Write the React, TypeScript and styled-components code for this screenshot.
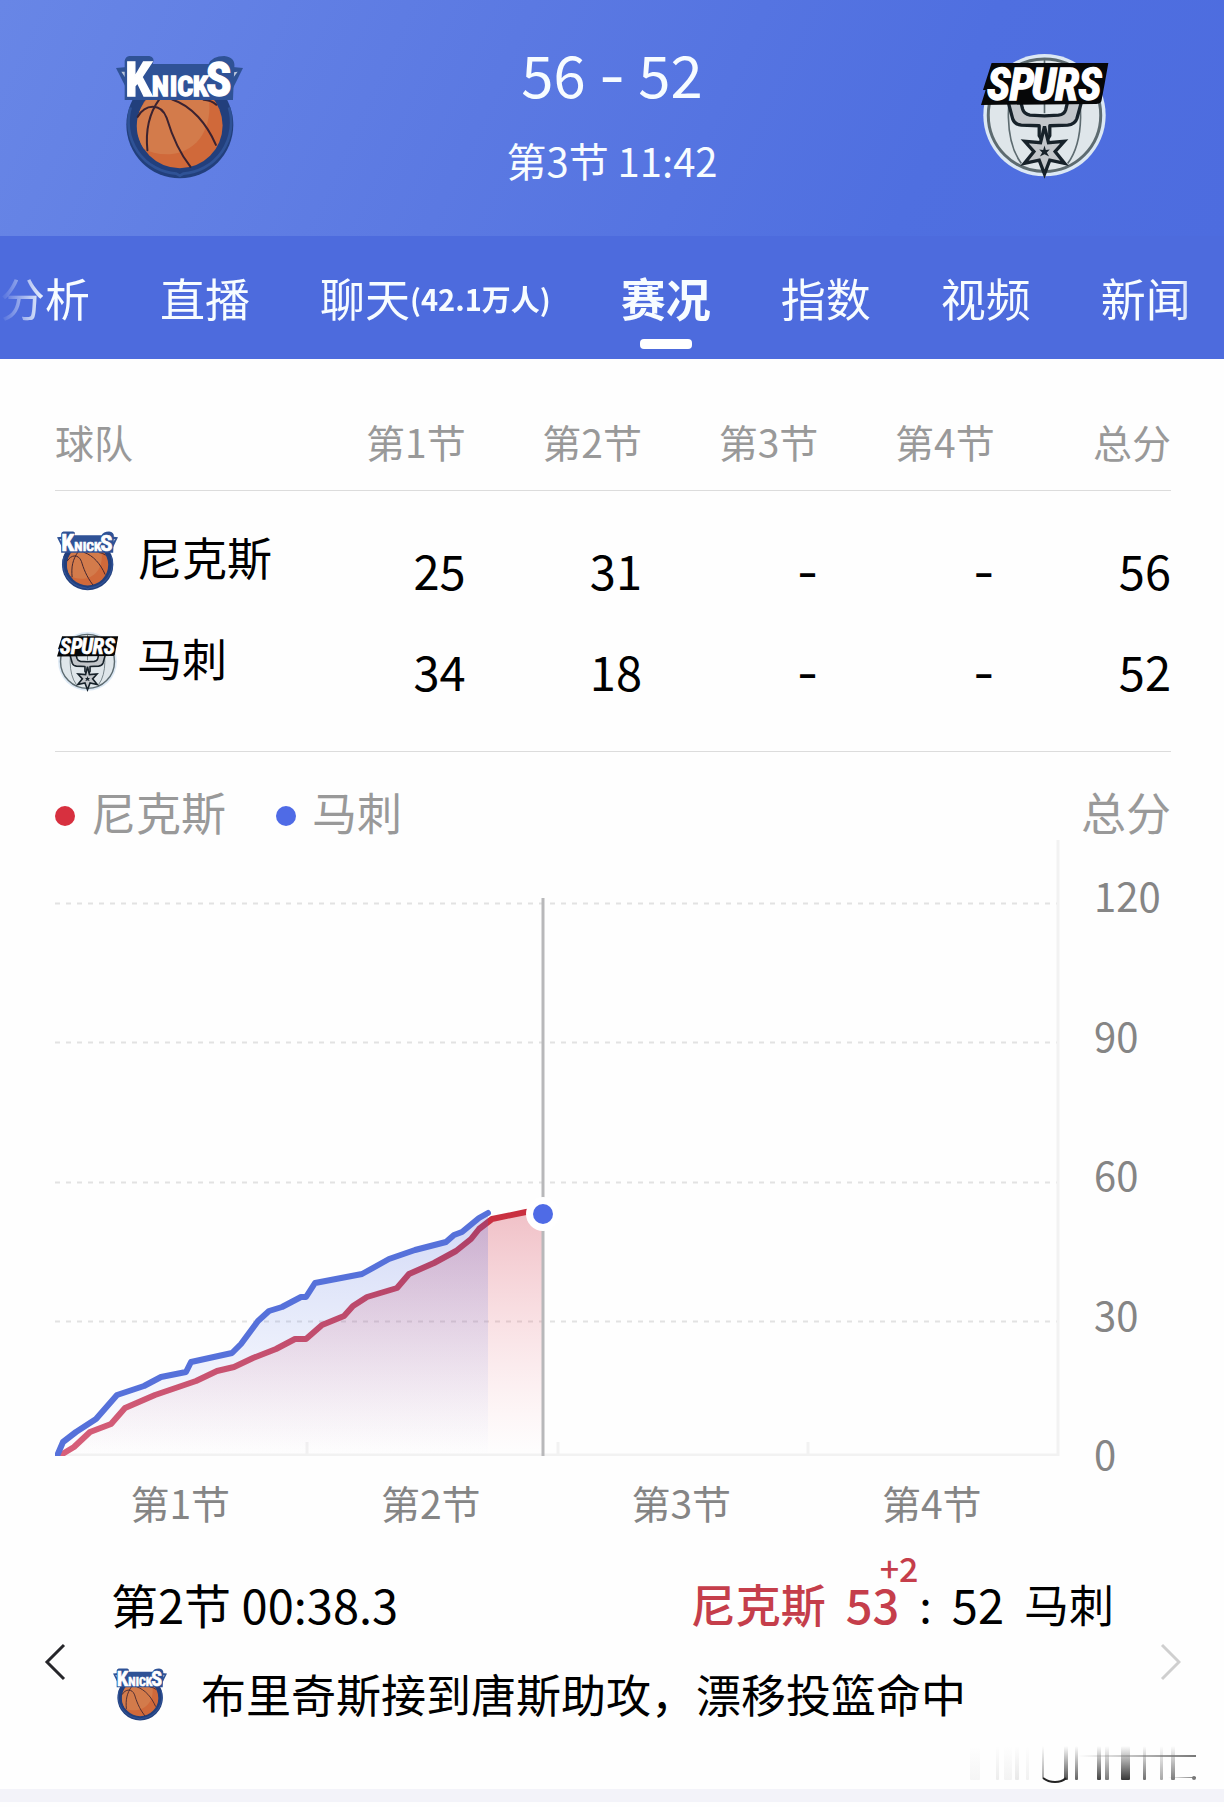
import React from "react";
import styled, { createGlobalStyle } from "styled-components";

const GlobalStyle = createGlobalStyle`
  *, *::before, *::after { box-sizing: border-box; }
  body {
    margin: 0;
    background: #fefefe;
    color: #000;
    font-family: "Noto Sans CJK SC", "Noto Sans", sans-serif;
    -webkit-font-smoothing: antialiased;
  }
  button { font: inherit; color: inherit; background: none; border: 0; padding: 0; cursor: pointer; }
`;

/* ---------- logos ---------- */

const LogoSvg = styled.svg<{ $width: number }>`
  display: block;
  flex: none;
  width: ${(p) => p.$width}px;
  height: auto;
  overflow: visible;
`;

const LogoText = styled.text`
  font-family: "Liberation Sans Narrow", "Roboto Condensed", Roboto, sans-serif;
  font-weight: 700;
  fill: #fff;
`;

function KnicksLogo({ width }: { width: number }) {
  return (
    <LogoSvg $width={width} viewBox="78 73 380 370" role="img" aria-label="尼克斯">
      <path d="M78 112 L120 108 L420 108 L458 112 L412 205 L125 205 Z" fill="#2f5296" />
      <path d="M94 123 L112 123 L112 150 Z M442 123 L424 125 L422 150 Z" fill="#b9c6dc" />
      <circle cx="269" cy="282" r="160" fill="#223f7c" />
      <path d="M122 230 A154 154 0 0 0 258 428 L269 434 L280 428 A154 154 0 0 0 416 230" fill="none" stroke="#2f5296" strokeWidth="8" />
      <circle cx="269" cy="284" r="128" fill="#d0693a" />
      <path d="M148 242 A128 128 0 0 1 355 200 C368 280 330 362 240 370 Q190 372 160 352 A128 128 0 0 1 148 242Z" fill="#d37b4b" />
      <g fill="none" stroke="#3b2230" strokeWidth="6" strokeLinecap="round">
        <path d="M208 205 C175 250 166 300 172 358" />
        <path d="M143 258 C165 220 212 215 230 262 C242 302 260 355 301 408" />
        <path d="M246 206 C305 225 350 280 377 342" />
        <path d="M340 207 Q362 208 378 222" />
      </g>
      <path d="M118 76 H178 Q196 80 188 100 H355 Q366 76 402 76 Q436 80 432 110 L428 208 H104 V90 Q106 78 118 76Z" fill="#2f5296" />
      <LogoText x="105" y="197" fontSize="146" stroke="#fff" strokeWidth="4">K</LogoText>
      <LogoText x="185 239 261 308" y="197" fontSize="84" stroke="#fff" strokeWidth="4">NICK</LogoText>
      <LogoText x="347" y="197" fontSize="142" stroke="#fff" strokeWidth="4">S</LogoText>
    </LogoSvg>
  );
}

function SpursLogo({ width }: { width: number }) {
  return (
    <LogoSvg $width={width} viewBox="62 71 384 378" role="img" aria-label="马刺">
      <circle cx="254" cy="256" r="185" fill="#dce8f4" />
      <circle cx="254" cy="256" r="170" fill="#dfe6ea" stroke="#5d6b70" strokeWidth="9" />
      <g fill="none" stroke="#5d6b70" strokeWidth="5">
        <path d="M254 88 V250" />
        <path d="M165 110 C140 200 130 330 184 402" />
        <path d="M343 110 C368 200 378 330 324 402" />
      </g>
      <path
        d="M144 215 L158 268 Q164 284 184 286 L238 288 V318 L254 345 L270 318 V288 L324 286 Q346 284 352 266 L366 215 L324 215 L318 240 Q314 254 296 256 L254 258 L210 256 Q192 252 188 238 L182 215 Z"
        fill="#c2c6ca"
        stroke="#17222a"
        strokeWidth="10"
        strokeLinejoin="round"
      />
      <path
        d="M254 290 L266 339 L314 335 L286 366 L315 402 L270 392 L254 434 L238 392 L193 402 L222 366 L194 335 L242 339 Z"
        fill="#c2c6ca"
        stroke="#17222a"
        strokeWidth="10"
      />
      <path d="M254 348 L258 361 L270 360 L261 369 L268 381 L254 374 L240 381 L247 369 L238 360 L250 361 Z" fill="#17222a" />
      <path d="M94 98 H447 L436 160 L426 214 Q422 222 410 222 L62 225 L76 180 H68 Z" fill="#060708" />
      <LogoText x="80 148 215 286 356" y="209" fontSize="134" fontStyle="italic" stroke="#fff" strokeWidth="4">SPURS</LogoText>
    </LogoSvg>
  );
}

/* ---------- scoreboard ---------- */

const Header = styled.header`
  height: 236px;
  padding: 0 116px 3px;
  display: flex;
  align-items: center;
  justify-content: space-between;
  background: linear-gradient(115deg, #6886e6 0%, #5b79e2 40%, #4f6fe0 75%, #4d6cdf 100%);
  color: #f7fcff;
`;

const Scoreboard = styled.div`
  display: flex;
  flex-direction: column;
  align-items: center;
  gap: 23px;
  padding-bottom: 16px;
  white-space: nowrap;
`;

const Score = styled.div`
  font-size: 58px;
  line-height: 80px;
`;

const Dash = styled.span`
  font-family: Inter, sans-serif;
  line-height: 0;
`;

const Clock = styled.div`
  font-size: 40px;
  line-height: 48px;
`;

/* ---------- tabs ---------- */

const TabBar = styled.nav`
  background: #4d6bdd;
  color: #f7fcff;
`;

const TabTrack = styled.div`
  display: flex;
  gap: 70px;
  overflow: hidden;
  mask-image: linear-gradient(to right, transparent 0, #000 46px, #000 calc(100% - 46px), transparent 100%);
`;

const Tab = styled.button<{ $active?: boolean }>`
  flex: none;
  display: flex;
  flex-direction: column;
  align-items: center;
  gap: 9px;
  padding: 30px 0 10px;
  font-size: 45px;
  line-height: 64px;
  font-weight: ${(p) => (p.$active ? 700 : 400)};
  white-space: nowrap;

  &::after {
    content: "";
    width: 52px;
    height: 10px;
    border-radius: 4px;
    background: ${(p) => (p.$active ? "#fff" : "transparent")};
  }
`;

const TabLabel = styled.span`
  display: flex;
  align-items: center;
`;

const TabNote = styled.small`
  font-size: 29px;
  font-weight: 700;
`;

/* ---------- quarter table ---------- */

const Content = styled.main`
  padding: 0 53px 0 55px;
`;

const TableWrap = styled.section`
  padding-bottom: 58px;
  border-bottom: 1px solid #dcdcdc;
`;

const QuarterTable = styled.table`
  width: 100%;
  table-layout: fixed;
  border-collapse: separate;
  border-spacing: 0;
`;

const HeadCell = styled.th<{ $first?: boolean }>`
  width: ${(p) => (p.$first ? "21%" : "auto")};
  padding: 56px 0 23px;
  border-bottom: 1px solid #dcdcdc;
  color: #999;
  font-size: 39px;
  font-weight: 400;
  line-height: 52px;
  text-align: ${(p) => (p.$first ? "left" : "right")};
  white-space: nowrap;
`;

const TeamCell = styled.th`
  padding: 40px 0 0;
  height: 101px;
  font-weight: 400;
  vertical-align: top;
`;

const Team = styled.div`
  display: flex;
  align-items: flex-start;
  gap: 19px;
  padding-left: 2px;
  font-size: 45px;
  line-height: 52px;
  white-space: nowrap;
`;

const NumberCell = styled.td`
  padding: 57px 0 0;
  font-size: 47px;
  line-height: 44px;
  text-align: right;
  vertical-align: top;
`;

/* ---------- chart ---------- */

const Legend = styled.div`
  display: flex;
  gap: 50px;
  padding-top: 32px;
  color: #999;
  font-size: 45px;
  line-height: 56px;
`;

const LegendItem = styled.span<{ $color: string }>`
  display: flex;
  align-items: center;
  gap: 16px;

  &::before {
    content: "";
    width: 20px;
    height: 20px;
    margin-top: 8px;
    border-radius: 50%;
    background: ${(p) => p.$color};
  }
`;

const LegendTotal = styled.span`
  margin-left: auto;
`;

const ChartGrid = styled.div`
  display: grid;
  grid-template-columns: 1fr 110px;
  color: #858585;
  font-size: 39px;
`;

const Plot = styled.svg`
  display: block;
  width: 100%;
  height: 616px;
`;

const Scale = styled.div`
  grid-row: 1 / span 2;
  grid-column: 2;
  display: flex;
  flex-direction: column;
  justify-content: space-between;
  height: 598px;
  margin-top: 35px;
  padding-left: 33px;
  font-size: 40px;
  line-height: 40px;
`;

const Periods = styled.div`
  display: grid;
  grid-template-columns: repeat(4, 1fr);
  padding: 16px 4px 0 0;
  line-height: 60px;
  text-align: center;
`;

const knicksLine =
  "4,616 19,607 35,592 56,584 70,568 100,555 141,541 162,531 179,527 198,518 221,509 240,499 251,499 267,485 289,476 298,466 312,457 342,448 354,434 379,423 401,411 416,399 424,389 437,379 471,372 487,370";
const spursLine =
  "2,616 8,602 21,592 41,579 62,555 89,546 106,537 131,532 136,522 177,513 186,504 203,481 214,471 227,467 246,457 251,457 260,443 307,434 334,419 360,410 391,402 399,395 407,392 424,378 433,373";

function ScoreChart() {
  return (
    <Plot viewBox="0 0 1006 616" preserveAspectRatio="none" role="img" aria-label="得分走势">
      <defs>
        <linearGradient id="redFill" gradientUnits="userSpaceOnUse" x1="0" y1="370" x2="0" y2="616">
          <stop offset="0" stopColor="#cf2f45" stopOpacity="0.3" />
          <stop offset="1" stopColor="#f06a7c" stopOpacity="0" />
        </linearGradient>
        <linearGradient id="blueFill" gradientUnits="userSpaceOnUse" x1="0" y1="370" x2="0" y2="616">
          <stop offset="0" stopColor="#4f68dd" stopOpacity="0.25" />
          <stop offset="1" stopColor="#5f86f0" stopOpacity="0" />
        </linearGradient>
        <linearGradient id="redStroke" gradientUnits="userSpaceOnUse" x1="0" y1="370" x2="0" y2="616">
          <stop offset="0" stopColor="#c92f3f" />
          <stop offset="1" stopColor="#d8607a" />
        </linearGradient>
      </defs>
      {[63, 202, 342, 481].map((y) => (
        <line key={y} x1="0" x2="1002" y1={y + 0.5} y2={y + 0.5} stroke="#e2e2e2" strokeWidth="2" strokeDasharray="5 6" />
      ))}
      <path d="M0 615 H1003 V0 M252 602 V615 M503 602 V615 M753 602 V615" fill="none" stroke="#f2f2f2" strokeWidth="3" />
      <polygon points={`${knicksLine} 487,616`} fill="url(#redFill)" />
      <polyline points={knicksLine} fill="none" stroke="url(#redStroke)" strokeWidth="6" strokeLinejoin="round" />
      <polygon points={`${spursLine} 433,616`} fill="url(#blueFill)" />
      <polyline points={spursLine} fill="none" stroke="#5671da" strokeWidth="6" strokeLinejoin="round" strokeLinecap="round" />
      <line x1="488" x2="488" y1="58" y2="616" stroke="#b8b8ba" strokeWidth="3" />
      <circle cx="488" cy="374" r="17" fill="#fff" />
      <circle cx="488" cy="374" r="10" fill="#4f6be6" />
    </Plot>
  );
}

/* ---------- play by play ---------- */

const Play = styled.section`
  display: flex;
  justify-content: space-between;
  padding: 40px 43px 0;
`;

const Arrow = styled.button<{ $muted?: boolean }>`
  flex: none;
  align-self: flex-start;
  width: 24px;
  padding-top: 57px;
  color: ${(p) => (p.$muted ? "#cfcfcf" : "#26262a")};

  svg { display: block; width: 24px; height: 66px; }
`;

const PlayBody = styled.div`
  flex: 1;
  display: flex;
  flex-direction: column;
  gap: 26px;
  padding: 0 43px 0 44px;
  font-size: 45px;
  line-height: 64px;
  white-space: nowrap;
`;

const PlayRow = styled.div`
  display: flex;
  justify-content: space-between;
`;

const PlayTime = styled.time`
  font-size: 47px;
`;

const PlayScore = styled.div`
  display: flex;
  gap: 20px;
`;

const Points = styled.span<{ $scored?: boolean }>`
  position: relative;
  font-size: 47px;
  color: ${(p) => (p.$scored ? "#c53e4b" : "inherit")};
  font-weight: ${(p) => (p.$scored ? 500 : 400)};
`;

const Scorer = styled.strong`
  color: #c53e4b;
  font-weight: 500;
`;

const Gain = styled.span`
  position: absolute;
  left: 34px;
  top: -20px;
  font-size: 34px;
  line-height: 32px;
`;

const PlayText = styled.div`
  display: flex;
  align-items: center;
  gap: 34px;
  padding-left: 2px;
`;

const Mark = styled.svg`
  display: block;
  width: 228px;
  height: 38px;
  margin: 20px 28px 5px auto;
`;

const Divider = styled.div`
  height: 13px;
  background: #f3f3f9;
`;

const rows = [
  { name: "尼克斯", Logo: KnicksLogo, values: ["25", "31", "-", "-", "56"] },
  { name: "马刺", Logo: SpursLogo, values: ["34", "18", "-", "-", "52"] },
];

const periods = ["第1节", "第2节", "第3节", "第4节"];

const bars: [number, number, number][] = [
  [2, 10, 0.04], [28, 3, 0.08], [36, 8, 0.05], [47, 4, 0.1], [58, 3, 0.06],
  [96, 4, 0.8], [107, 3, 0.7], [129, 4, 0.85], [137, 4, 0.6], [153, 9, 0.9],
  [175, 3, 0.65], [192, 3, 0.4], [203, 4, 0.6],
];

export default function App() {
  return (
    <>
      <GlobalStyle />
      <Header>
        <KnicksLogo width={127} />
        <Scoreboard>
          <Score>56 <Dash>-</Dash> 52</Score>
          <Clock>第3节 11:42</Clock>
        </Scoreboard>
        <SpursLogo width={127} />
      </Header>
      <TabBar>
        <TabTrack>
          <Tab>分析</Tab>
          <Tab>直播</Tab>
          <Tab>
            <TabLabel>聊天<TabNote>(42.1万人)</TabNote></TabLabel>
          </Tab>
          <Tab $active>赛况</Tab>
          <Tab>指数</Tab>
          <Tab>视频</Tab>
          <Tab>新闻</Tab>
        </TabTrack>
      </TabBar>
      <Content>
        <TableWrap>
          <QuarterTable>
            <thead>
              <tr>
                <HeadCell $first scope="col">球队</HeadCell>
                {[...periods, "总分"].map((label) => (
                  <HeadCell key={label} scope="col">{label}</HeadCell>
                ))}
              </tr>
            </thead>
            <tbody>
              {rows.map(({ name, Logo, values }) => (
                <tr key={name}>
                  <TeamCell scope="row">
                    <Team><Logo width={61} />{name}</Team>
                  </TeamCell>
                  {values.map((value, i) => (
                    <NumberCell key={i}>{value === "-" ? <Dash>-</Dash> : value}</NumberCell>
                  ))}
                </tr>
              ))}
            </tbody>
          </QuarterTable>
        </TableWrap>
        <Legend>
          <LegendItem $color="#d7303f">尼克斯</LegendItem>
          <LegendItem $color="#4f6be6">马刺</LegendItem>
          <LegendTotal>总分</LegendTotal>
        </Legend>
        <ChartGrid>
          <ScoreChart />
          <Scale>
            {[120, 90, 60, 30, 0].map((v) => <span key={v}>{v}</span>)}
          </Scale>
          <Periods>
            {periods.map((label) => <span key={label}>{label}</span>)}
          </Periods>
        </ChartGrid>
      </Content>
      <Play>
        <Arrow aria-label="上一条">
          <svg viewBox="0 0 24 66" fill="none" stroke="currentColor" strokeWidth="3"><path d="M21 16 L4 33 L21 50" /></svg>
        </Arrow>
        <PlayBody>
          <PlayRow>
            <PlayTime>第2节 00:38.3</PlayTime>
            <PlayScore>
              <Scorer>尼克斯</Scorer>
              <Points $scored>53<Gain>+2</Gain></Points>
              <span>:</span>
              <Points>52</Points>
              <span>马刺</span>
            </PlayScore>
          </PlayRow>
          <PlayText><KnicksLogo width={54} />布里奇斯接到唐斯助攻，漂移投篮命中</PlayText>
        </PlayBody>
        <Arrow $muted aria-label="下一条">
          <svg viewBox="0 0 24 66" fill="none" stroke="currentColor" strokeWidth="3"><path d="M5 16 L22 33 L5 50" /></svg>
        </Arrow>
      </Play>
      <Mark viewBox="0 0 228 38" aria-hidden="true">
        <defs>
          <linearGradient id="markFade" x1="0" y1="0" x2="0" y2="1">
            <stop offset="0" stopColor="#222" stopOpacity="0" />
            <stop offset="1" stopColor="#222" />
          </linearGradient>
          <linearGradient id="markLine" x1="0" y1="0" x2="1" y2="0">
            <stop offset="0" stopColor="#777" stopOpacity="0" />
            <stop offset="1" stopColor="#777" />
          </linearGradient>
        </defs>
        {bars.map(([x, w, o]) => (
          <rect key={x} x={x} y="0" width={w} height="34" rx="1" fill="url(#markFade)" opacity={o} />
        ))}
        <rect x="74" y="0" width="2" height="32" fill="url(#markFade)" opacity="0.4" />
        <path d="M75 32 Q80 36 87 36 Q94 36 98 32" fill="none" stroke="#222" strokeWidth="2" />
        <rect x="110" y="9" width="118" height="2" fill="url(#markLine)" />
        <rect x="200" y="31" width="28" height="1" fill="url(#markLine)" />
        <circle cx="226" cy="32" r="2" fill="#777" />
      </Mark>
      <Divider />
    </>
  );
}
